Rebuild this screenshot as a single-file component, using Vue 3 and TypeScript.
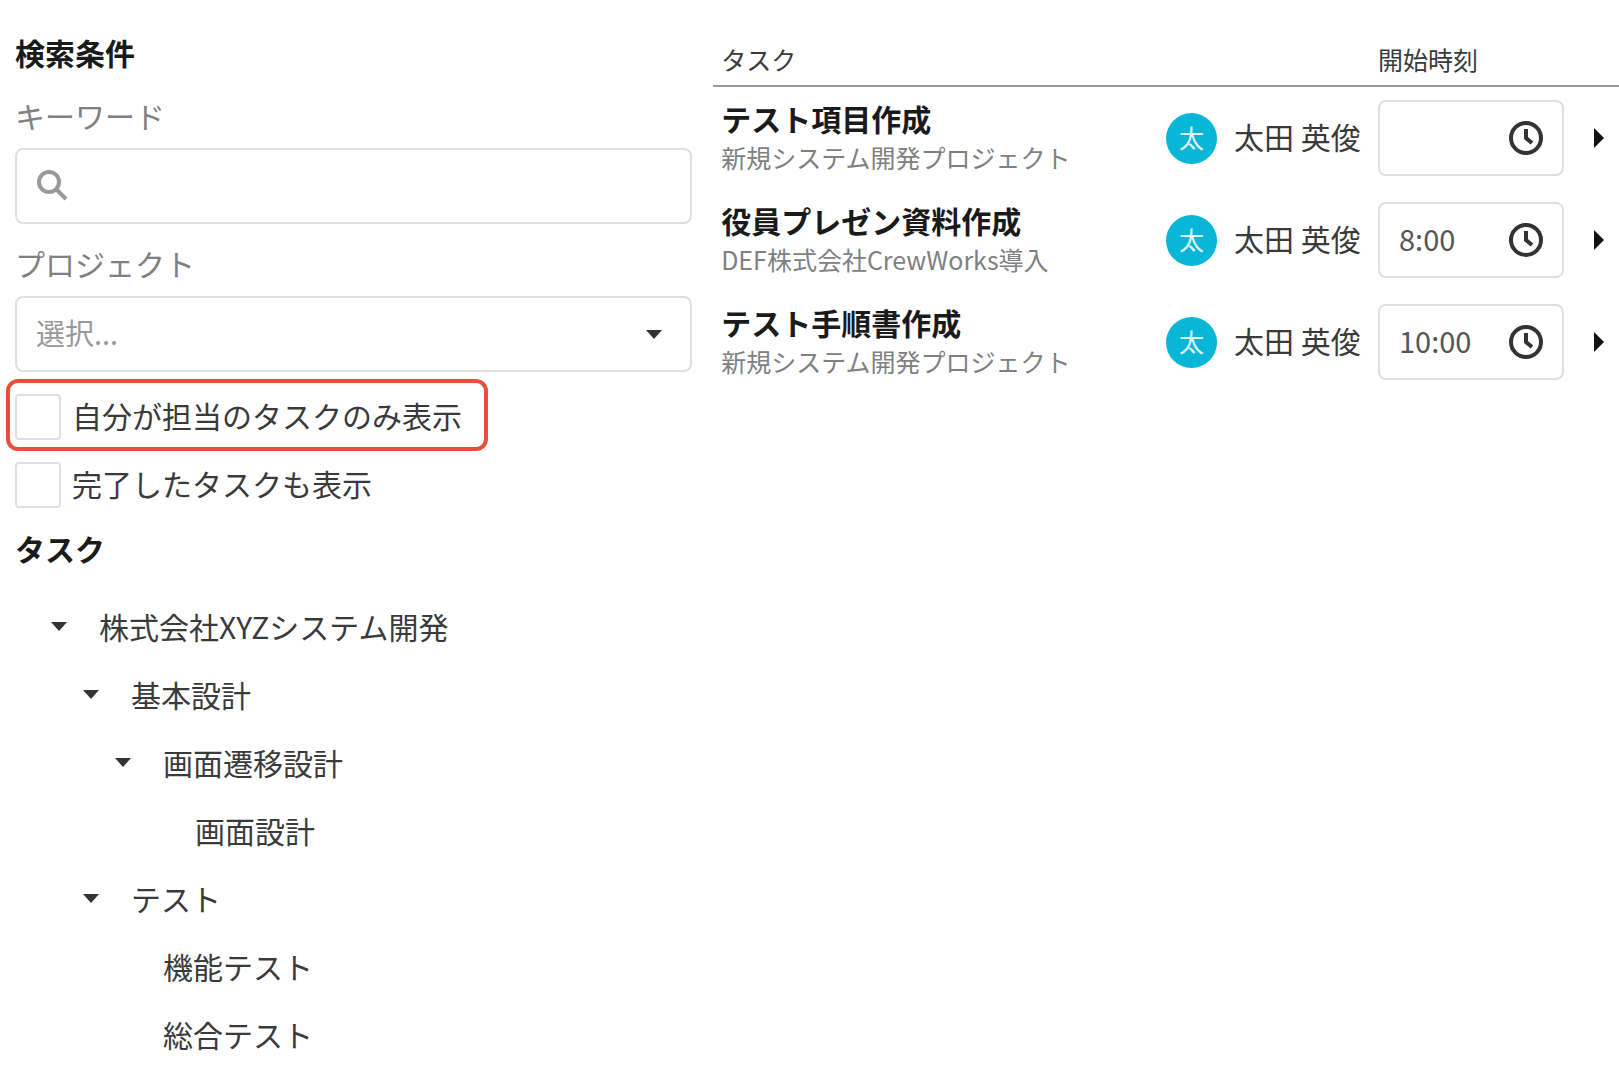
<script setup lang="ts">
import { ref } from 'vue'

interface TaskRow {
  id: number
  name: string
  project: string
  assignee: string
  start: string
}

interface TreeNode {
  id: number
  label: string
  level: number
  parent: boolean
}

const keyword = ref('')
const project = ref('')
const onlyMine = ref(false)
const showDone = ref(false)

const tree: TreeNode[] = [
  { id: 1, label: '株式会社XYZシステム開発', level: 0, parent: true },
  { id: 2, label: '基本設計', level: 1, parent: true },
  { id: 3, label: '画面遷移設計', level: 2, parent: true },
  { id: 4, label: '画面設計', level: 3, parent: false },
  { id: 5, label: 'テスト', level: 1, parent: true },
  { id: 6, label: '機能テスト', level: 2, parent: false },
  { id: 7, label: '総合テスト', level: 2, parent: false },
]

const tasks = ref<TaskRow[]>([
  { id: 1, name: 'テスト項目作成', project: '新規システム開発プロジェクト', assignee: '太田 英俊', start: '' },
  { id: 2, name: '役員プレゼン資料作成', project: 'DEF株式会社CrewWorks導入', assignee: '太田 英俊', start: '8:00' },
  { id: 3, name: 'テスト手順書作成', project: '新規システム開発プロジェクト', assignee: '太田 英俊', start: '10:00' },
])
</script>

<template>
  <div class="page">
    <section class="filters">
      <h2 class="heading">検索条件</h2>

      <label class="field-label" for="keyword">キーワード</label>
      <div class="box">
        <svg class="search-icon" viewBox="0 0 34 34" aria-hidden="true">
          <circle cx="13" cy="13" r="10" />
          <path d="M20 20 L30 30" />
        </svg>
        <input id="keyword" v-model="keyword" class="bare" type="text" />
      </div>

      <label class="field-label" for="project">プロジェクト</label>
      <div class="box">
        <select id="project" v-model="project" class="bare select">
          <option value="">選択...</option>
          <option v-for="n in tree.slice(0, 1)" :key="n.id" :value="n.label">{{ n.label }}</option>
        </select>
        <svg class="caret select-caret" viewBox="0 0 16 9" aria-hidden="true"><path d="M0 0h16L8 9z" /></svg>
      </div>

      <div class="checks">
        <label class="check highlighted">
          <input v-model="onlyMine" type="checkbox" />
          <span class="check-text">自分が担当のタスクのみ表示</span>
        </label>
        <label class="check">
          <input v-model="showDone" type="checkbox" />
          <span class="check-text">完了したタスクも表示</span>
        </label>
      </div>

      <h2 class="heading">タスク</h2>
      <ul class="tree">
        <li v-for="node in tree" :key="node.id" :class="['node', 'level-' + node.level]">
          <button v-if="node.parent" class="toggle" type="button" :aria-label="node.label">
            <svg class="caret" viewBox="0 0 16 9" aria-hidden="true"><path d="M0 0h16L8 9z" /></svg>
          </button>
          <span v-else class="toggle"></span>
          <span>{{ node.label }}</span>
        </li>
      </ul>
    </section>

    <table class="tasks">
      <thead>
        <tr>
          <th class="col-task" scope="col">タスク</th>
          <th class="col-person" scope="col"></th>
          <th class="col-time" scope="col">開始時刻</th>
          <th class="col-more" scope="col"></th>
        </tr>
      </thead>
      <tbody>
        <tr v-for="task in tasks" :key="task.id">
          <td class="col-task">
            <div class="task-name">{{ task.name }}</div>
            <div class="task-project">{{ task.project }}</div>
          </td>
          <td class="col-person">
            <div class="person">
              <span class="avatar">{{ task.assignee.charAt(0) }}</span>
              <span class="person-name">{{ task.assignee }}</span>
            </div>
          </td>
          <td class="col-time">
            <div class="box">
              <input v-model="task.start" class="bare" type="text" :aria-label="task.name + ' 開始時刻'" />
              <button class="icon-button" type="button" aria-label="時刻を選択">
                <svg class="clock" viewBox="0 0 34 34" aria-hidden="true">
                  <circle cx="17" cy="17" r="15" />
                  <path d="M17 8 V17 L23 22" />
                </svg>
              </button>
            </div>
          </td>
          <td class="col-more">
            <button class="icon-button more" type="button" :aria-label="task.name + ' 詳細'">
              <svg class="arrow" viewBox="0 0 10 20" aria-hidden="true"><path d="M0 0v20L10 10z" /></svg>
            </button>
          </td>
        </tr>
      </tbody>
    </table>
  </div>
</template>

<style>
body {
  margin: 0;
  background: #fff;
}
</style>

<style scoped>
.page {
  display: grid;
  grid-template-columns: 77fr 103fr;
  column-gap: 21px;
  align-items: start;
  padding-left: 15px;
  font-family: 'Noto Sans CJK JP', 'Noto Sans', sans-serif;
  font-size: 30px;
  line-height: 40px;
  color: #3a3a3a;
}

.page * {
  box-sizing: border-box;
}

.filters {
  padding-top: 30px;
  min-width: 0;
}

.heading {
  margin: 0;
  font-size: 30px;
  line-height: 44px;
  font-weight: 700;
  color: #1a1a1a;
}

.field-label {
  display: block;
  margin: 20px 0 12px;
  padding-bottom: 2px;
  line-height: 38px;
  color: #808080;
}

.heading + .field-label {
  margin-top: 22px;
}

.box {
  position: relative;
  display: flex;
  align-items: center;
  height: 76px;
  padding: 0 19px;
  border: 2px solid #e0e0e0;
  border-radius: 8px;
  background: #fff;
}

.bare {
  flex: 1;
  min-width: 0;
  width: 100%;
  height: 100%;
  margin: 0;
  padding: 0 0 4px;
  border: 0;
  outline: 0;
  background: transparent;
  font: inherit;
  font-size: 29px;
  color: #555;
}

.select {
  appearance: none;
  color: #999;
}

.select-caret {
  position: absolute;
  right: 28px;
  pointer-events: none;
}

.search-icon {
  flex: none;
  width: 34px;
  height: 34px;
  margin-right: 12px;
  fill: none;
  stroke: #999;
  stroke-width: 4;
}

.caret {
  width: 16px;
  height: 9px;
  fill: #333;
}

.checks {
  display: grid;
  justify-items: start;
  gap: 22px;
  margin: 22px 0 18px;
}

.check {
  position: relative;
  display: flex;
  align-items: center;
  gap: 11px;
  height: 46px;
}

.check input {
  appearance: none;
  width: 46px;
  height: 46px;
  margin: 0;
  border: 2px solid #e0e0e0;
  border-radius: 4px;
  background: #fff;
}

.check input:checked {
  background: #08b6d8;
}

.check-text,
.person-name {
  padding-bottom: 4px;
}

.highlighted::after {
  content: '';
  position: absolute;
  inset: -15px -26px -11px -9px;
  border: 4px solid #e74f3d;
  border-radius: 12px;
  pointer-events: none;
}

.tree {
  margin: 22px 0 0;
  padding: 0 0 0 32px;
  list-style: none;
}

.node {
  display: flex;
  align-items: center;
  height: 68px;
}

.level-1 {
  padding-left: 32px;
}

.level-2 {
  padding-left: 64px;
}

.level-3 {
  padding-left: 96px;
}

.toggle {
  display: flex;
  align-items: center;
  width: 52px;
  height: 40px;
  padding: 0 0 0 4px;
  border: 0;
  background: transparent;
}

.tasks {
  width: 100%;
  border-collapse: separate;
  border-spacing: 0;
  table-layout: fixed;
}

.tasks th {
  padding: 41px 0 8px;
  border-bottom: 2px solid #999;
  font-size: 25px;
  line-height: 36px;
  font-weight: 400;
  text-align: left;
}

.tasks td {
  padding: 13px 0;
  vertical-align: middle;
}

.tasks .col-task {
  padding-left: 8px;
}

.tasks td.col-task {
  padding-top: 0;
  padding-bottom: 4px;
}

.col-person {
  width: 212px;
}

.col-time {
  width: 186px;
}

.col-more {
  width: 55px;
}

.task-name {
  line-height: 42px;
  font-weight: 700;
  color: #1a1a1a;
}

.task-project {
  font-size: 25px;
  line-height: 36px;
  color: #808080;
}

.person {
  display: flex;
  align-items: center;
  gap: 17px;
  white-space: nowrap;
}

.avatar {
  width: 51px;
  height: 51px;
  padding-bottom: 2px;
  border-radius: 50%;
  background: #08b6d8;
  color: #e6f8fb;
  font-size: 25px;
  line-height: 49px;
  text-align: center;
}

.icon-button {
  display: flex;
  flex: none;
  padding: 0;
  border: 0;
  background: transparent;
}

.clock {
  width: 34px;
  height: 34px;
  fill: none;
  stroke: #333;
  stroke-width: 4;
}

.more {
  width: 100%;
  padding-left: 30px;
}

.arrow {
  width: 10px;
  height: 20px;
  fill: #111;
}
</style>
